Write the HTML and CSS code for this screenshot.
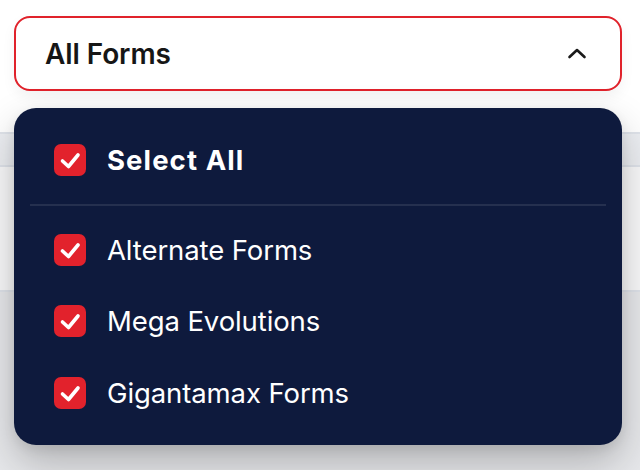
FILE: index.html
```html
<!DOCTYPE html>
<html lang="en">
<head>
<meta charset="utf-8">
<title>Forms filter</title>
<link rel="stylesheet" href="styles.css">
</head>
<body>
<div class="page">
  <header class="header">
    <button class="trigger" type="button">
      <span class="trigger-label">All Forms</span>
      <svg class="chevron" width="20" height="12" viewBox="0 0 20 12"><path d="M2.5 10 L10 3 L17.5 10" fill="none" stroke="#1a1a1a" stroke-width="2.6" stroke-linecap="round" stroke-linejoin="round"/></svg>
    </button>
  </header>
  <div class="band"></div>
  <section class="content"></section>
  <section class="rest"></section>

  <div class="menu">
    <label class="option option-all">
      <span class="box"><svg width="32" height="32" viewBox="0 0 32 32"><path d="M8.5 17 L14.5 22.5 L24 11" fill="none" stroke="#fff" stroke-width="3.6" stroke-linecap="round" stroke-linejoin="round"/></svg></span>
      <span class="text text-all">Select All</span>
    </label>
    <div class="divider"></div>
    <label class="option">
      <span class="box"><svg width="32" height="32" viewBox="0 0 32 32"><path d="M8.5 17 L14.5 22.5 L24 11" fill="none" stroke="#fff" stroke-width="3.6" stroke-linecap="round" stroke-linejoin="round"/></svg></span>
      <span class="text">Alternate Forms</span>
    </label>
    <label class="option">
      <span class="box"><svg width="32" height="32" viewBox="0 0 32 32"><path d="M8.5 17 L14.5 22.5 L24 11" fill="none" stroke="#fff" stroke-width="3.6" stroke-linecap="round" stroke-linejoin="round"/></svg></span>
      <span class="text">Mega Evolutions</span>
    </label>
    <label class="option">
      <span class="box"><svg width="32" height="32" viewBox="0 0 32 32"><path d="M8.5 17 L14.5 22.5 L24 11" fill="none" stroke="#fff" stroke-width="3.6" stroke-linecap="round" stroke-linejoin="round"/></svg></span>
      <span class="text">Gigantamax Forms</span>
    </label>
  </div>
</div>
</body>
</html>
```

FILE: styles.css
```css
* { box-sizing: border-box; }
html, body { margin: 0; padding: 0; }
body {
  font-family: Inter, "Noto Sans", "Liberation Sans", sans-serif;
  background: #e7e8eb;
  width: 640px;
  height: 470px;
  overflow: hidden;
}
.page {
  position: relative;
  width: 640px;
  height: 470px;
  display: flex;
  flex-direction: column;
}
.header {
  background: #ffffff;
  height: 132px;
  padding: 16px 18px 0 14px;
}
.trigger {
  width: 608px;
  height: 75px;
  border: 2px solid #e0222b;
  border-radius: 16px;
  background: #ffffff;
  display: flex;
  align-items: center;
  justify-content: space-between;
  padding: 0 33px 0 29px;
  font-family: inherit;
  box-shadow: 0 6px 14px rgba(0, 0, 0, 0.05);
}
.trigger-label {
  font-size: 28px;
  font-weight: 600;
  color: #161616;
  letter-spacing: -0.1px;
}
.chevron { display: block; margin-top: -1px; }
.band {
  height: 35px;
  background: #eceef2;
  border-top: 2px solid #dfe3ea;
  border-bottom: 2px solid #dfe3ea;
}
.content {
  height: 125px;
  background: #f9f9fa;
  border-bottom: 2px solid #dfe3ea;
}
.rest {
  flex: 1;
  background: #e7e8eb;
}
.menu {
  position: absolute;
  top: 108px;
  left: 14px;
  width: 608px;
  height: 337px;
  background: #0e1a3d;
  border-radius: 22px;
  padding: 16px 16px;
  display: flex;
  flex-direction: column;
  box-shadow: 0 18px 40px rgba(0, 0, 0, 0.24), 0 4px 12px rgba(0, 0, 0, 0.08);
}
.option {
  height: 72px;
  display: flex;
  align-items: center;
  gap: 21px;
  padding-left: 24px;
  color: #ffffff;
}
.option-all { margin-bottom: 8px; }
.box {
  width: 32px;
  height: 32px;
  border-radius: 7px;
  background: #e2222c;
  flex: none;
}
.box svg { display: block; }
.text {
  font-size: 27.5px;
  font-weight: 400;
  letter-spacing: -0.1px;
}
.text-all {
  font-weight: 700;
  letter-spacing: 1.1px;
}
.divider {
  height: 2px;
  background: #25304f;
  margin-bottom: 8px;
}
```
